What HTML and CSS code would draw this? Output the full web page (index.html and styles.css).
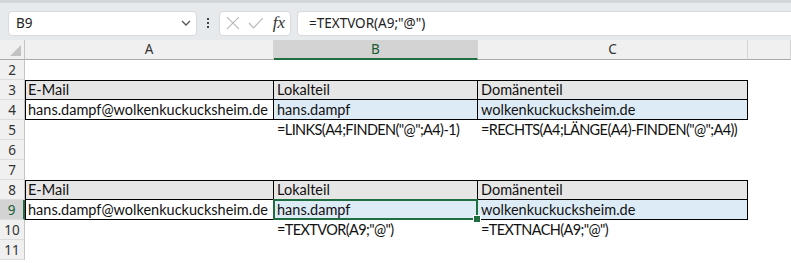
FILE: index.html
```html
<!DOCTYPE html>
<html lang="de">
<head>
    <meta charset="UTF-8">
    <title>TEXTVOR / TEXTNACH</title>
    <link rel="stylesheet" href="styles.css">
</head>
<body>
    <div class="toolbar">
        <div class="namebox">
            <span>B9</span>
            <svg class="chevron" width="10" height="6" viewBox="0 0 10 6"><polyline points="1,1 5,5 9,1" fill="none" stroke="#555" stroke-width="1.3"/></svg>
        </div>
        <div class="dots"><i></i><i></i><i></i></div>
        <div class="fxbox">
            <svg width="14" height="14" viewBox="0 0 14 14"><path d="M1 1 L13 13 M13 1 L1 13" stroke="#b9b9b9" stroke-width="1.2"/></svg>
            <svg width="16" height="14" viewBox="0 0 16 14"><polyline points="1,7 5.5,12 15,2" fill="none" stroke="#b9b9b9" stroke-width="1.2"/></svg>
            <span class="fx">fx</span>
        </div>
        <div class="formula">=TEXTVOR(A9;"@")</div>
    </div>

    <div class="sheet">
        <div class="corner"></div>
        <div class="colhead">A</div>
        <div class="colhead sel">B</div>
        <div class="colhead">C</div>
        <div class="colhead"></div>

        <div class="rowhead">2</div>
        <div class="cell"></div><div class="cell"></div><div class="cell"></div><div class="cell"></div>

        <div class="rowhead">3</div>
        <div class="cell bx bt bl gray">E-Mail</div>
        <div class="cell bx bt gray">Lokalteil</div>
        <div class="cell bx bt gray">Domänenteil</div>
        <div class="cell"></div>

        <div class="rowhead">4</div>
        <div class="cell bx bl">hans.dampf@wolkenkuckucksheim.de</div>
        <div class="cell bx blue">hans.dampf</div>
        <div class="cell bx blue">wolkenkuckucksheim.de</div>
        <div class="cell"></div>

        <div class="rowhead">5</div>
        <div class="cell"></div>
        <div class="cell f">=LINKS(A4;FINDEN("@";A4)-1)</div>
        <div class="cell f">=RECHTS(A4;LÄNGE(A4)-FINDEN("@";A4))</div>
        <div class="cell"></div>

        <div class="rowhead">6</div>
        <div class="cell"></div><div class="cell"></div><div class="cell"></div><div class="cell"></div>

        <div class="rowhead">7</div>
        <div class="cell"></div><div class="cell"></div><div class="cell"></div><div class="cell"></div>

        <div class="rowhead">8</div>
        <div class="cell bx bt bl gray">E-Mail</div>
        <div class="cell bx bt gray">Lokalteil</div>
        <div class="cell bx bt gray">Domänenteil</div>
        <div class="cell"></div>

        <div class="rowhead sel">9</div>
        <div class="cell bx bl">hans.dampf@wolkenkuckucksheim.de</div>
        <div class="cell bx blue active">hans.dampf</div>
        <div class="cell bx blue">wolkenkuckucksheim.de</div>
        <div class="cell"></div>

        <div class="rowhead">10</div>
        <div class="cell"></div>
        <div class="cell f">=TEXTVOR(A9;"@")</div>
        <div class="cell f">=TEXTNACH(A9;"@")</div>
        <div class="cell"></div>

        <div class="rowhead">11</div>
        <div class="cell"></div><div class="cell"></div><div class="cell"></div><div class="cell"></div>
    </div>
</body>
</html>
```

FILE: styles.css
```css
* {
    margin: 0;
    padding: 0;
    box-sizing: border-box;
}

body {
    width: 791px;
    height: 263px;
    overflow: hidden;
    background-color: #fff;
    font-family: 'Noto Sans', 'Open Sans', sans-serif;
}

.toolbar {
    height: 40px;
    display: flex;
    align-items: center;
    padding: 3px 0 0 8px;
    background-color: #e7eaed;
    border-top: 3px solid #d4d7da;
}

.namebox,
.fxbox,
.formula {
    height: 25px;
    background-color: #fff;
    border: 1px solid #d8dbde;
    border-radius: 4px;
    display: flex;
    align-items: center;
}

.namebox {
    width: 189px;
    padding: 0 5px 0 7px;
    justify-content: space-between;
    font-size: 13.5px;
    color: #222;
}

.dots {
    width: 22px;
    display: flex;
    flex-direction: column;
    align-items: center;
    gap: 2px;
}

.dots i {
    width: 2px;
    height: 2px;
    background-color: #444;
}

.fxbox {
    width: 72px;
    padding: 0 5px 0 6px;
    gap: 8px;
}

.fx {
    font-family: 'Liberation Serif', serif;
    font-style: italic;
    font-size: 17px;
    color: #333;
    margin-left: 1px;
}

.formula {
    flex: 1;
    margin-left: 6px;
    padding-left: 11px;
    border-right: none;
    border-radius: 4px 0 0 4px;
    font-size: 13.5px;
    color: #222;
}

.sheet {
    display: grid;
    grid-template-columns: 25px 249px 204px 270px 1fr;
    grid-auto-rows: 20px;
}

.corner {
    background-color: #f0f0f0;
    border-right: 1px solid #c4c4c4;
    border-bottom: 1px solid #a9a9a9;
    position: relative;
}

.corner::after {
    content: "";
    position: absolute;
    right: 3px;
    bottom: 3px;
    border-left: 11px solid transparent;
    border-bottom: 11px solid #c2c2c2;
}

.colhead {
    background-color: #f0f0f0;
    border-right: 1px solid #d4d4d4;
    border-bottom: 1px solid #a9a9a9;
    text-align: center;
    font-size: 13.5px;
    line-height: 19px;
    color: #333;
}

.colhead.sel {
    background-color: #d3d3d3;
    border-bottom: 2px solid #1e6e42;
    color: #185c37;
}

.rowhead {
    background-color: #f0f0f0;
    border-right: 1px solid #c4c4c4;
    border-bottom: 1px solid #dcdcdc;
    text-align: center;
    font-size: 13.5px;
    line-height: 20px;
    color: #333;
}

.rowhead.sel {
    background-color: #d3d3d3;
    border-right: 2px solid #1e6e42;
    color: #185c37;
}

.cell {
    font-family: 'Lato', 'Liberation Sans', sans-serif;
    font-size: 14.5px;
    line-height: 20px;
    padding-left: 3px;
    color: #111;
    white-space: nowrap;
    overflow: visible;
}

/* formulas shown as text: Calibri caps run narrower than Lato */
.cell.f {
    letter-spacing: -0.6px;
}

.bx {
    border-right: 1px solid #000;
    border-bottom: 1px solid #000;
    line-height: 19px;
}

.bt {
    border-top: 1px solid #000;
    line-height: 18px;
}

.bl {
    border-left: 1px solid #000;
    padding-left: 2px;
}

.gray {
    background-color: #e7e6e6;
}

.blue {
    background-color: #ddebf7;
}

.active {
    position: relative;
}

.active::before {
    content: "";
    position: absolute;
    left: -1px;
    top: -1px;
    right: -1px;
    bottom: -1px;
    border: 2px solid #1e6e42;
}

.active::after {
    content: "";
    position: absolute;
    right: -4px;
    bottom: -4px;
    width: 6px;
    height: 6px;
    background-color: #1e6e42;
    border: 1px solid #fff;
}
```
